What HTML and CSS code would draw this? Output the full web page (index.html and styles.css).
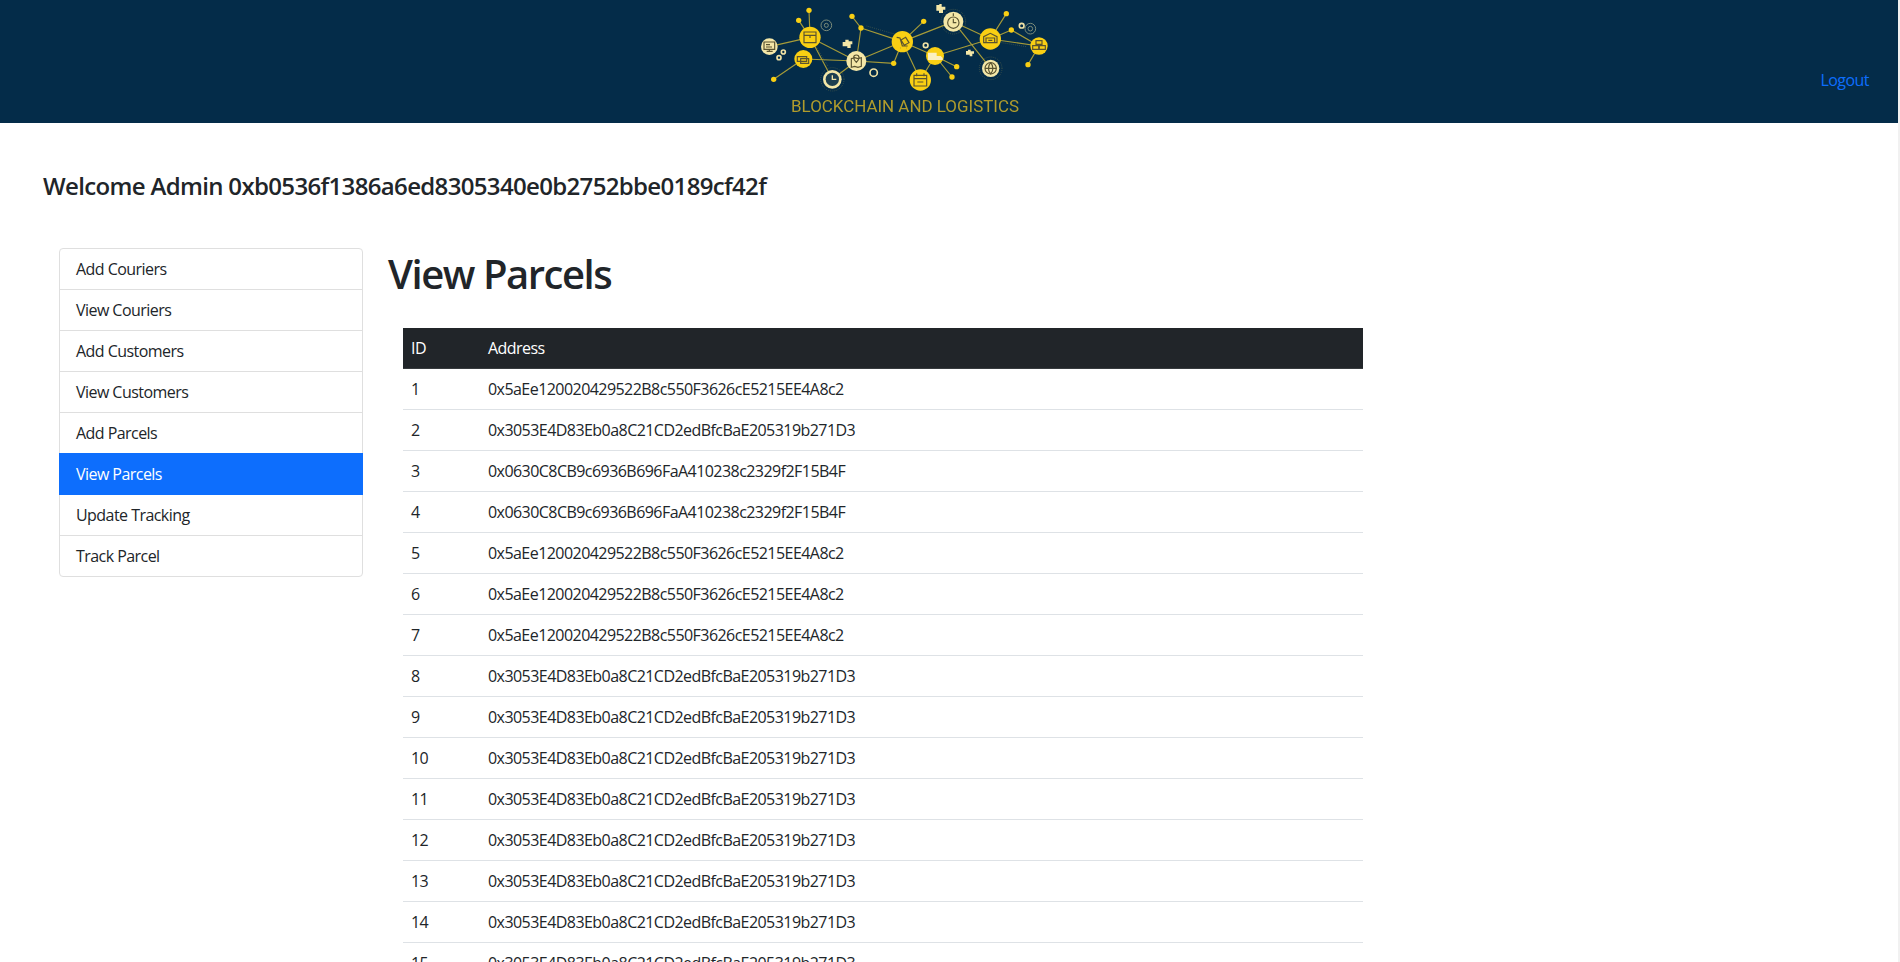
FILE: index.html
```html
<!DOCTYPE html>
<html lang="en">
<head>
<meta charset="utf-8">
<title>View Parcels</title>
<link rel="stylesheet" href="styles.css">
</head>
<body>
<div class="page">
<header class="topbar">
  <svg class="logo" viewBox="0 0 960 369" width="320" height="123" role="img" aria-label="Blockchain and Logistics">
    <g class="links">
      <path d="M210 112L176 61M210 112L207 31M88 140L210 112M210 112L349 183M190 177L349 183M190 177L101 238M277 238L349 183M210 112L277 238M349 183L363 84M363 84L336 49M363 84L487 125M349 183L487 125M349 183L461 190M461 190L487 125M487 125L541 240M487 125L585 168M487 125L551 64M487 125L640 65M585 168L541 240M585 168L650 200M585 168L636 231M585 168L751 117M640 65L751 117M640 65L752 205M751 117L799 41M751 117L814 90M751 117L897 138M814 90L897 138M897 138L864 194"/>
      <path class="dash" d="M380 78L470 104M228 140L265 200M785 128L858 140"/>
      <circle class="dash" cx="277" cy="238" r="35"/>
      <circle class="dash" cx="640" cy="65" r="37"/>
      <circle class="dash" cx="752" cy="205" r="34"/>
    </g>
    <g class="dots">
      <circle cx="207" cy="31" r="8"/><circle cx="176" cy="61" r="8"/><circle cx="101" cy="238" r="8"/><circle cx="336" cy="49" r="8"/><circle cx="363" cy="84" r="8"/><circle cx="551" cy="64" r="8"/><circle cx="461" cy="190" r="8"/><circle cx="650" cy="200" r="8"/><circle cx="636" cy="231" r="8"/><circle cx="799" cy="41" r="8"/><circle cx="814" cy="90" r="8"/><circle cx="864" cy="194" r="8"/>
    </g>
    <g class="rings">
      <circle cx="259" cy="76" r="16"/><circle cx="259" cy="76" r="6"/>
      <circle cx="871" cy="86" r="16"/><circle cx="871" cy="86" r="7"/>
    </g>
    <g class="gears">
      <circle cx="130" cy="156" r="6"/><circle cx="117" cy="173" r="6"/><circle cx="401" cy="218" r="11"/><circle cx="557" cy="136" r="7"/><circle cx="845" cy="77" r="7"/>
    </g>
    <g class="cream">
      <path d="M308 126h8v-7h10v5h11v9h-5v11h-10v-5h-14z"/>
      <path d="M589 15h9v-3h7v8h11v9h-7v10h-12v-7h-8z"/>
      <path d="M678 153h6v-4h8v5h10v7h-5v8h-8v-5h-11z"/>
      <circle cx="88" cy="140" r="25"/><circle cx="349" cy="183" r="30"/><circle cx="277" cy="238" r="28"/><circle cx="640" cy="65" r="30"/><circle cx="752" cy="205" r="26"/>
    </g>
    <g class="yellow">
      <circle cx="210" cy="112" r="32"/><circle cx="190" cy="177" r="27"/><circle cx="487" cy="125" r="32"/><circle cx="585" cy="168" r="27"/><circle cx="541" cy="240" r="32"/><circle cx="751" cy="117" r="32"/><circle cx="897" cy="138" r="26"/>
    </g>
    <circle class="clock-face" cx="277" cy="238" r="20"/>
    <path class="clock-hands" d="M277 226v12h12"/>
    <g class="glyph">
      <path d="M192 96h36v32h-36zM192 106h36M210 106v8"/>
      <path d="M172 170h28v14h-28zM182 176h24v14h-24z"/>
      <path d="M72 126h32v22H72zM80 154h18M88 148v6M78 134h12M78 141h18"/>
      <path d="M334 176l10-3 10 3 10-3v26l-10 3-10-3-10 3zM349 165a8 8 0 0 1 8 8c0 6-8 14-8 14s-8-8-8-14a8 8 0 0 1 8-8z"/>
      <path d="M470 112l10 2 7 24h16M483 120l14-8 10 16-14 8zM482 144h1M500 144h1"/>
      <circle cx="640" cy="68" r="17"/><path d="M640 56v12h9M640 40v8"/>
      <path d="M731 128v-18l20-10 20 10v18zM738 128v-14h26v14M745 121h12"/>
      <circle cx="752" cy="205" r="17"/><path d="M735 205h34M752 188c-9 10-9 24 0 34M752 188c9 10 9 24 0 34"/>
      <path d="M522 226h38v32h-38zM522 236h38M530 220v9M552 220v9M532 246h18"/>
      <path d="M888 122h18v11h-18zM878 137h18v11h-18zM898 137h18v11h-18z"/>
    </g>
    <path class="truck" d="M564 158h26v22h-26zM590 168h12l6 6v6h-18z"/>
    <text class="logo-text" x="153" y="335" textLength="684" lengthAdjust="spacingAndGlyphs">BLOCKCHAIN AND LOGISTICS</text>
  </svg>
  <a class="logout" href="#">Logout</a>
</header>
<h4 class="welcome">Welcome Admin 0xb0536f1386a6ed8305340e0b2752bbe0189cf42f</h4>
<div class="columns">
  <nav class="side">
    <a class="side-item" href="#">Add Couriers</a>
    <a class="side-item" href="#">View Couriers</a>
    <a class="side-item" href="#">Add Customers</a>
    <a class="side-item" href="#">View Customers</a>
    <a class="side-item" href="#">Add Parcels</a>
    <a class="side-item active" href="#">View Parcels</a>
    <a class="side-item" href="#">Update Tracking</a>
    <a class="side-item" href="#">Track Parcel</a>
  </nav>
  <main class="content">
    <h1 class="title">View Parcels</h1>
    <table class="parcels">
      <thead><tr><th class="col-id">ID</th><th>Address</th></tr></thead>
      <tbody>
        <tr><td>1</td><td>0x5aEe120020429522B8c550F3626cE5215EE4A8c2</td></tr>
        <tr><td>2</td><td>0x3053E4D83Eb0a8C21CD2edBfcBaE205319b271D3</td></tr>
        <tr><td>3</td><td>0x0630C8CB9c6936B696FaA410238c2329f2F15B4F</td></tr>
        <tr><td>4</td><td>0x0630C8CB9c6936B696FaA410238c2329f2F15B4F</td></tr>
        <tr><td>5</td><td>0x5aEe120020429522B8c550F3626cE5215EE4A8c2</td></tr>
        <tr><td>6</td><td>0x5aEe120020429522B8c550F3626cE5215EE4A8c2</td></tr>
        <tr><td>7</td><td>0x5aEe120020429522B8c550F3626cE5215EE4A8c2</td></tr>
        <tr><td>8</td><td>0x3053E4D83Eb0a8C21CD2edBfcBaE205319b271D3</td></tr>
        <tr><td>9</td><td>0x3053E4D83Eb0a8C21CD2edBfcBaE205319b271D3</td></tr>
        <tr><td>10</td><td>0x3053E4D83Eb0a8C21CD2edBfcBaE205319b271D3</td></tr>
        <tr><td>11</td><td>0x3053E4D83Eb0a8C21CD2edBfcBaE205319b271D3</td></tr>
        <tr><td>12</td><td>0x3053E4D83Eb0a8C21CD2edBfcBaE205319b271D3</td></tr>
        <tr><td>13</td><td>0x3053E4D83Eb0a8C21CD2edBfcBaE205319b271D3</td></tr>
        <tr><td>14</td><td>0x3053E4D83Eb0a8C21CD2edBfcBaE205319b271D3</td></tr>
        <tr><td>15</td><td>0x3053E4D83Eb0a8C21CD2edBfcBaE205319b271D3</td></tr>
      </tbody>
    </table>
  </main>
</div>
</div>
</body>
</html>
```
FILE: styles.css
```css
* { box-sizing: border-box; }
html, body { margin: 0; height: 100%; overflow: hidden; }
body {
  background: #f1f1f1;
  color: #212529;
  font-family: "Open Sans", "Noto Sans", sans-serif;
  font-size: 16px;
  line-height: 24px;
  letter-spacing: -0.55px;
}
.page { width: 1898px; height: 962px; background: #fff; overflow: hidden; }
.topbar {
  height: 123px;
  background: #042c49;
  display: flex;
  justify-content: center;
  padding-right: 98px;
  position: relative;
}
.logo { display: block; filter: blur(0.5px); }
.links { fill: none; stroke: #a69b38; stroke-width: 3.5; }
.links .dash { stroke-dasharray: 2 4; stroke: #6f7650; stroke-width: 2; }
.dots, .yellow { fill: #f9cf13; }
.cream { fill: #f4e7a8; }
.rings { fill: none; stroke: #7c8c7a; stroke-width: 3; }
.gears { fill: none; stroke: #f0e2a4; stroke-width: 5; }
.glyph { fill: none; stroke: #5a5330; stroke-width: 3.5; }
.clock-face { fill: #1d3f50; }
.clock-hands { fill: none; stroke: #f4e7a8; stroke-width: 4; }
.truck { fill: #fbf0c0; }
.logo-text { fill: #b09c2c; font-family: "Roboto", sans-serif; font-size: 50px; font-weight: 400; letter-spacing: 0; }
.logout {
  position: absolute;
  right: 29px;
  top: 68px;
  color: #0d6efd;
  text-decoration: none;
}
.welcome {
  margin: 0;
  padding: 48px 0 0 43px;
  height: 125px;
  font-size: 24px;
  line-height: 29px;
  font-weight: 600;
  letter-spacing: -0.66px;
}
.columns { display: flex; padding-left: 59px; }
.side {
  width: 304px;
  align-self: flex-start;
}
.side-item {
  display: block;
  height: 42px;
  margin-top: -1px;
  padding: 8px 16px;
  color: #212529;
  text-decoration: none;
  border: 1px solid #dfdfdf;
}
.side-item:first-child { margin-top: 0; border-radius: 4px 4px 0 0; }
.side-item:last-child { border-radius: 0 0 4px 4px; }
.side-item.active {
  background: #0d6efd;
  color: #fff;
  border-color: #0d6efd;
  position: relative;
  z-index: 1;
}
.content { width: 1000px; padding-left: 25px; }
.title {
  margin: 0;
  font-size: 40px;
  line-height: 48px;
  font-weight: 600;
  letter-spacing: -1.45px;
  height: 80px;
  padding-top: 2px;
}
.parcels {
  border-collapse: separate;
  border-spacing: 0;
  width: 960px;
  margin-left: 15px;
}
.parcels th {
  background: #212529;
  color: #fff;
  font-weight: 400;
  text-align: left;
  border-bottom: 1px solid #373b3e;
}
.parcels th, .parcels td { padding: 8px; height: 41px; }
.parcels td { border-bottom: 1px solid #dee2e6; }
.col-id { width: 77px; }
```
